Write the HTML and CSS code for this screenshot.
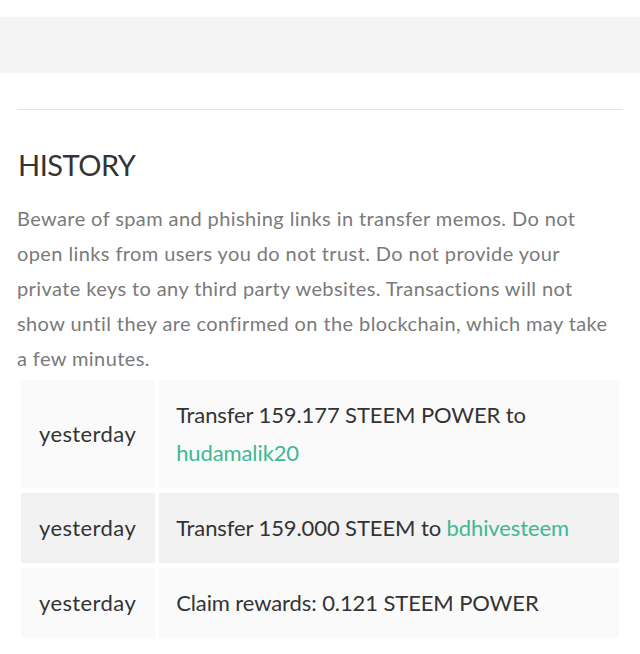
FILE: index.html
```html
<!DOCTYPE html>
<html>
<head>
<meta charset="utf-8">
<link rel="stylesheet" href="styles.css">
</head>
<body>
<div class="band"></div>
<main class="content">
  <hr class="rule">
  <h2 class="title">HISTORY</h2>
  <p class="notice">Beware of spam and phishing links in transfer memos. Do not open links from users you do not trust. Do not provide your private keys to any third party websites. Transactions will not show until they are confirmed on the blockchain, which may take a few minutes.</p>
  <table class="history">
    <tbody>
      <tr class="odd">
        <td class="date">yesterday</td>
        <td class="desc">Transfer 159.177 STEEM POWER to <a class="user" href="#">hudamalik20</a></td>
      </tr>
      <tr class="even">
        <td class="date">yesterday</td>
        <td class="desc">Transfer 159.000 STEEM to <a class="user" href="#">bdhivesteem</a></td>
      </tr>
      <tr class="odd">
        <td class="date">yesterday</td>
        <td class="desc">Claim rewards: 0.121 STEEM POWER</td>
      </tr>
    </tbody>
  </table>
</main>
</body>
</html>
```

FILE: styles.css
```css
html, body {
  margin: 0;
  padding: 0;
  background: #ffffff;
}
body {
  font-family: Lato, "Liberation Sans", sans-serif;
  color: #333333;
}
.band {
  margin-top: 17px;
  height: 56px;
  background: #f4f4f4;
}
.content {
  padding: 0 17px;
}
.rule {
  margin: 36px 0 0 0;
  border: 0;
  border-top: 1px solid #e4e4e4;
  height: 0;
}
.title {
  margin: 37px 0 0 1px;
  font-size: 29px;
  line-height: 36px;
  letter-spacing: -0.5px;
  font-weight: 400;
  color: #333333;
}
.notice {
  margin: 18px 0 0 0;
  font-size: 20px;
  line-height: 35px;
  letter-spacing: 0.4px;
  color: #7a7a7a;
}
.history {
  margin-top: -1px;
  width: 100%;
  border-collapse: separate;
  border-spacing: 4px 5px;
  font-size: 22px;
  line-height: 38px;
  color: #333333;
}
.history td {
  padding: 16px 18px;
  vertical-align: middle;
}
.history .date {
  white-space: nowrap;
  width: 1px;
  padding-right: 19px;
  letter-spacing: 0.4px;
}
.history .desc {
  padding-left: 17px;
  letter-spacing: -0.1px;
}
.odd td {
  background: #fafafa;
}
.even td {
  background: #f2f2f2;
}
.user {
  color: #3db892;
  text-decoration: none;
}
```
